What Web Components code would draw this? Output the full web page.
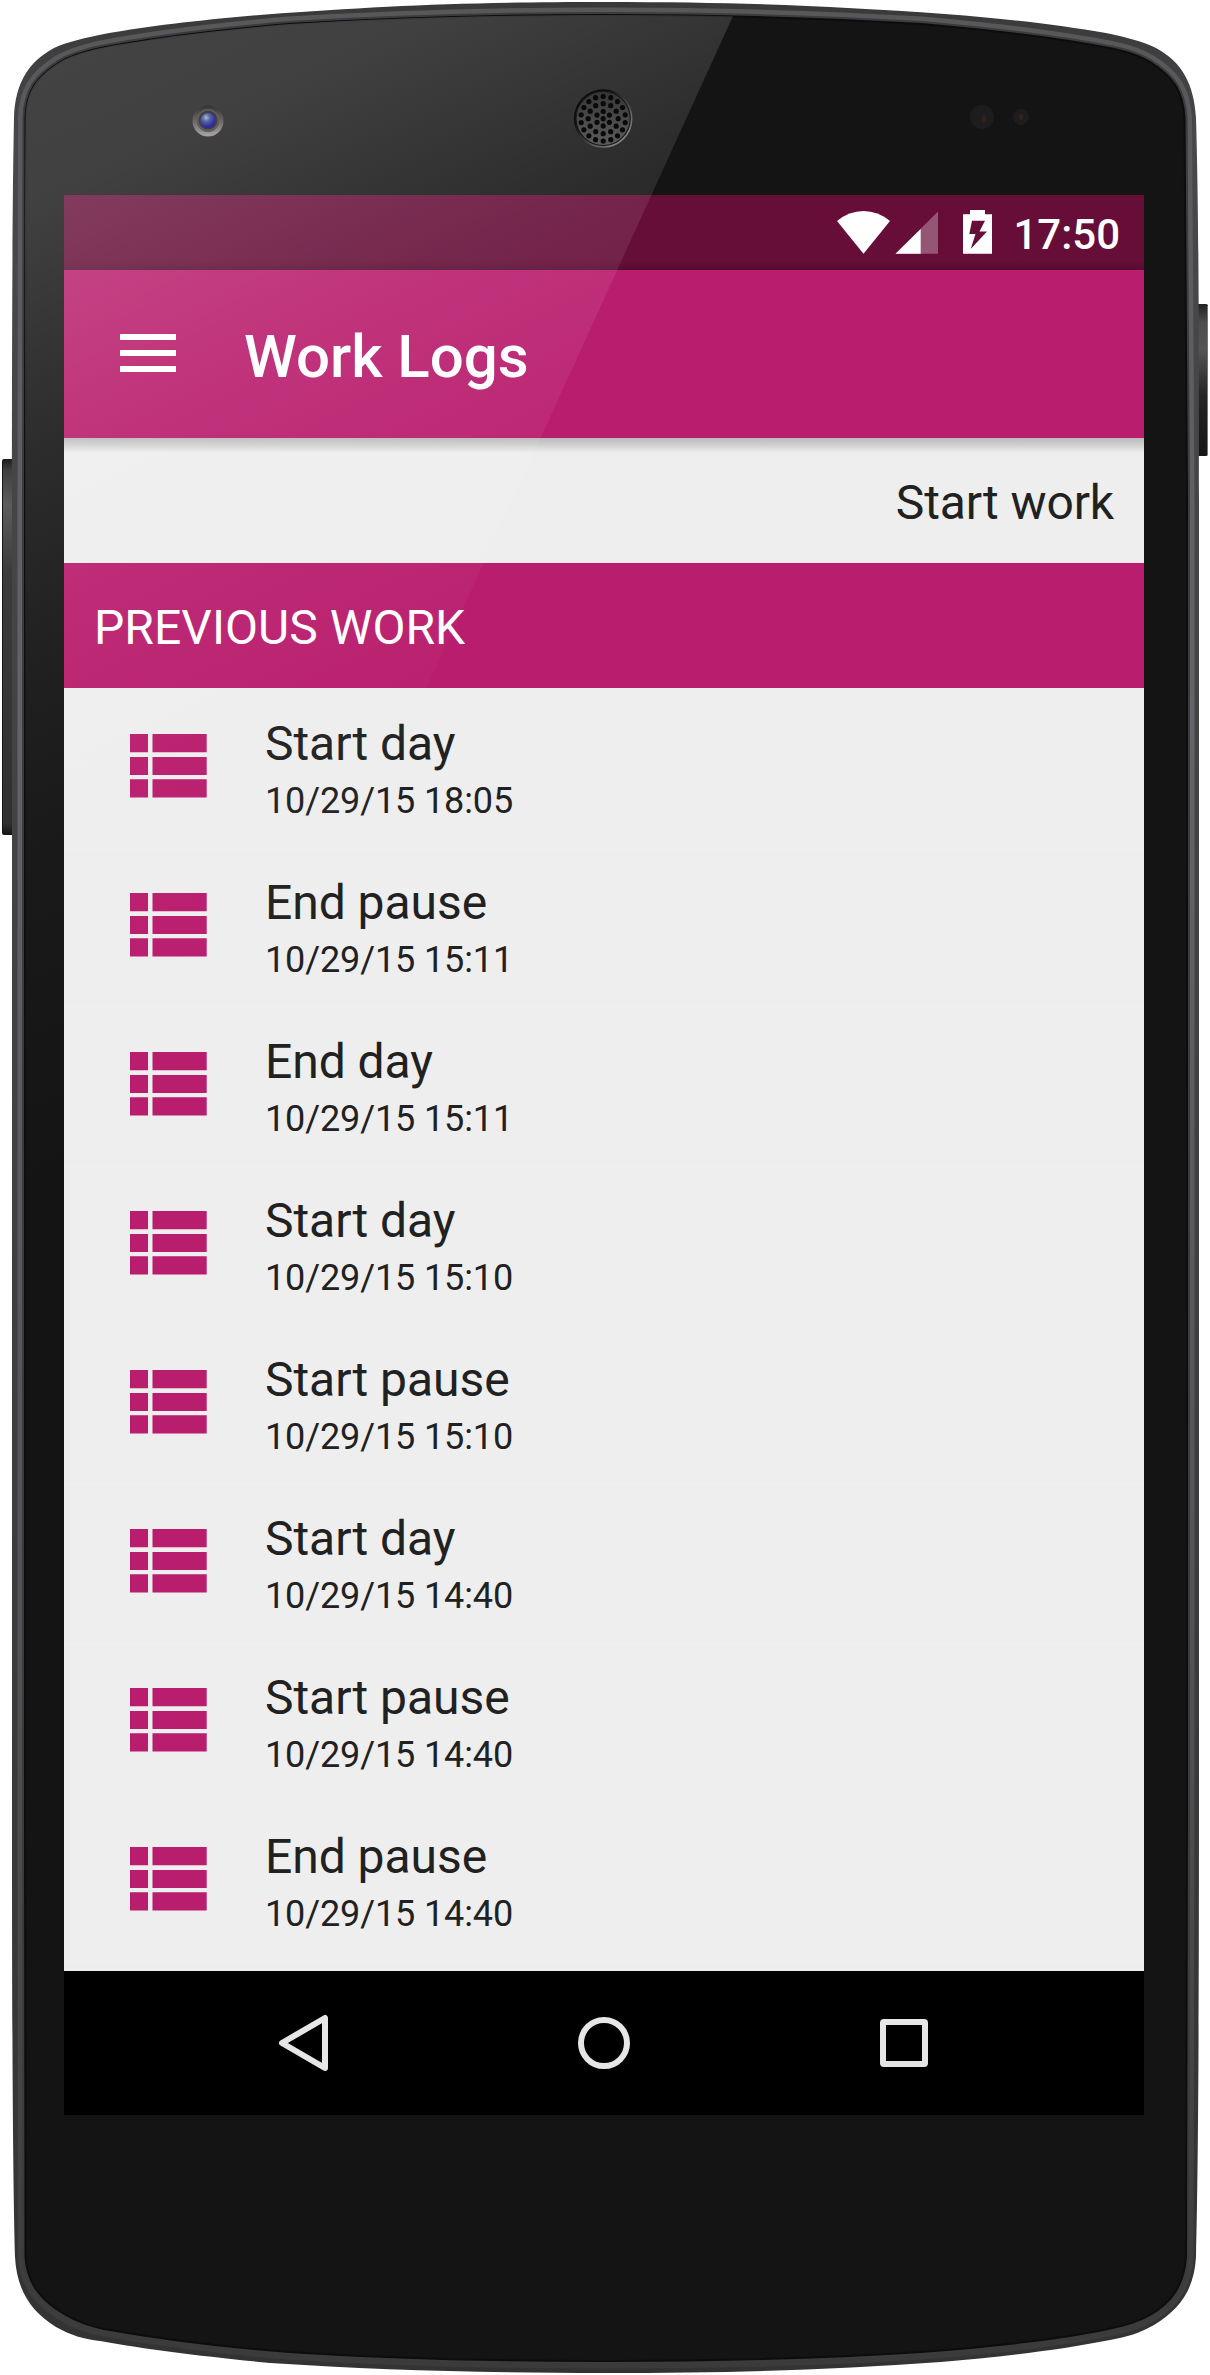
<!DOCTYPE html>
<html lang="en">
<head>
<meta charset="utf-8">
<title>Work Logs</title>
<style>
html,body{margin:0;padding:0;background:#fff}
body{width:1210px;height:2375px;overflow:hidden;font-family:Roboto,sans-serif;--pink:#b91d6d}
</style>
</head>
<body>
<phone-frame>
  <status-bar time="17:50"></status-bar>
  <app-bar>Work Logs</app-bar>
  <action-row>Start work</action-row>
  <section-header>PREVIOUS WORK</section-header>
  <log-list>
    <log-item when="10/29/15 18:05">Start day</log-item>
    <log-item when="10/29/15 15:11">End pause</log-item>
    <log-item when="10/29/15 15:11">End day</log-item>
    <log-item when="10/29/15 15:10">Start day</log-item>
    <log-item when="10/29/15 15:10">Start pause</log-item>
    <log-item when="10/29/15 14:40">Start day</log-item>
    <log-item when="10/29/15 14:40">Start pause</log-item>
    <log-item when="10/29/15 14:40">End pause</log-item>
  </log-list>
  <nav-bar></nav-bar>
</phone-frame>
<script>
const define = (name, render) => customElements.define(name, class extends HTMLElement {
  constructor() {
    super();
    this.attachShadow({ mode: 'open' }).innerHTML = render(this);
  }
});

// Outline of the casing and of the glass face
const OUTER = 'M605 2C470 2 380 6 266 14.500C200 20 150 26 104 34C85 38 67 42 54 48C28 62 15 84 14 118C12.500 200 12 300 12 500V1800C12 2050 13 2180 15 2257C17 2292 32 2312 56 2327C72 2336 84 2339 100 2341C150 2350 200 2356 270 2363C380 2370 480 2373 605 2373C730 2373 830 2370 941 2362C1000 2357 1060 2350 1110 2340C1127 2337 1140 2333 1154 2325C1180 2309 1194 2290 1196 2257C1198 2180 1199 2050 1199 1800V500C1199 300 1198.500 200 1196 118C1194 84 1182 62 1156 48C1142 41 1125 37 1106 33C1060 25 1010 19 945 14C830 6 740 2 605 2Z';
const INNER = 'M605 15C480 15 390 18 289 24C220 30 150 38 96 49C84 52 70 56 60 62C36 77 26 92 25.500 118C25 200 25 300 25 500V1800C25 2050 25 2180 25.500 2257C27 2284 42 2301 64 2314C76 2321 88 2326 104 2329C160 2339 210 2346 289 2352C380 2358 480 2361 605 2361C730 2361 830 2358 921 2352C1000 2346 1060 2339 1108 2329C1124 2326 1138 2322 1150 2315C1172 2302 1184 2285 1186 2257C1187 2180 1187 2050 1187 1800V500C1186 300 1186 200 1184.500 118C1183 92 1174 77 1150 62C1140 56 1128 52 1114 49C1060 38 990 30 921 24C820 18 730 15 605 15Z';

const holes = () => {
  let s = '';
  [[0, 1, 0], [7.2, 6, 0.5], [15, 12, 0], [22.3, 18, 0.5]].forEach(([r, n, o]) => {
    for (let i = 0; i < n; i++) {
      const a = (i + o) / n * Math.PI * 2;
      s += `<circle cx="${(603.2 + r * Math.cos(a)).toFixed(1)}" cy="${(118.7 + r * Math.sin(a)).toFixed(1)}" r="2.600"/>`;
    }
  });
  return s;
};

define('phone-frame', () => `
<style>
:host{display:block;position:relative;width:1210px;height:2375px}
svg{position:absolute;left:0;top:0;width:1210px;height:2375px;pointer-events:none}
.over{z-index:5}
.screen{position:relative;display:flex;flex-direction:column;width:1080px;height:1920px;margin:0 66px 0 64px;background:#eee}
.pad{height:195px}
</style>
<svg viewBox="0 0 1210 2375" aria-hidden="true">
  <defs>
    <linearGradient id="rim" x1="0" y1="0" x2="0" y2="1"><stop offset="0" stop-color="#39393a"/><stop offset=".06" stop-color="#48484b"/><stop offset=".5" stop-color="#404043"/><stop offset="1" stop-color="#333"/></linearGradient>
    <linearGradient id="lip" x1="0" y1="0" x2="0" y2="1"><stop offset="0" stop-color="#58585b"/><stop offset=".3" stop-color="#646468"/><stop offset=".7" stop-color="#525254"/><stop offset="1" stop-color="#3b3b3b"/></linearGradient>
    <linearGradient id="keyL" x1="0" y1="0" x2="0" y2="1"><stop offset="0" stop-color="#1c1c1c"/><stop offset=".03" stop-color="#404040"/><stop offset=".12" stop-color="#5c5c5c"/><stop offset=".3" stop-color="#3c3c3c"/><stop offset=".97" stop-color="#303030"/><stop offset="1" stop-color="#151515"/></linearGradient>
    <linearGradient id="keyR" x1="0" y1="0" x2="0" y2="1"><stop offset="0" stop-color="#222"/><stop offset=".12" stop-color="#4b4b4b"/><stop offset=".3" stop-color="#555"/><stop offset=".6" stop-color="#252525"/><stop offset="1" stop-color="#161616"/></linearGradient>
    <linearGradient id="spk" x1="0" y1="0" x2="1" y2="1"><stop offset=".3" stop-color="#0c0c0c"/><stop offset=".85" stop-color="#858585"/></linearGradient>
    <linearGradient id="mesh" x1="0" y1="0" x2="0" y2="1"><stop offset="0" stop-color="#363636"/><stop offset="1" stop-color="#5c5c5c"/></linearGradient>
    <linearGradient id="cam" x1="0" y1="0" x2="0" y2="1"><stop offset="0" stop-color="#333"/><stop offset=".5" stop-color="#6b6967"/><stop offset="1" stop-color="#aaa7a3"/></linearGradient>
    <radialGradient id="lens" cx=".38" cy=".3" r=".8"><stop offset="0" stop-color="#b5c0cc"/><stop offset=".3" stop-color="#5c6ba0"/><stop offset=".7" stop-color="#3230b0"/><stop offset="1" stop-color="#2b2768"/></radialGradient>
  </defs>
  <rect x="2" y="459" width="14" height="376" rx="2" fill="url(#keyL)"/>
  <path d="M2.500 461V833" stroke="#161616"/>
  <rect x="1194" y="304" width="14" height="152" rx="2" fill="url(#keyR)"/>
  <path d="M1207.500 306V455" stroke="#777"/>
  <path d="${OUTER}" fill="url(#rim)"/>
  <path d="${INNER}" fill="none" stroke="url(#lip)" stroke-width="15"/>
  <path d="${INNER}" fill="none" stroke="#3c3c3e" stroke-width="6"/>
  <path d="${INNER}" fill="#141414" stroke="#0d0d0d" stroke-width="2"/>
  <circle cx="982" cy="117" r="12" fill="#1e1d1d"/><ellipse cx="984" cy="119" rx="2" ry="3.500" fill="#36211a"/>
  <circle cx="1021" cy="117" r="8" fill="#1e1d1d"/><ellipse cx="1021" cy="117" rx="2" ry="3" fill="#36211a"/>
</svg>
<div class="pad"></div>
<div class="screen"><slot></slot></div>
<svg class="over" viewBox="0 0 1210 2375" aria-hidden="true">
  <defs>
    <linearGradient id="glare" gradientUnits="userSpaceOnUse" x1="0" y1="0" x2="473" y2="990"><stop offset="0" stop-color="#fff" stop-opacity=".205"/><stop offset=".18" stop-color="#fff" stop-opacity=".19"/><stop offset=".38" stop-color="#fff" stop-opacity=".105"/><stop offset=".55" stop-color="#fff" stop-opacity=".055"/><stop offset=".7" stop-color="#fff" stop-opacity=".025"/><stop offset="1" stop-color="#fff" stop-opacity="0"/></linearGradient>
    <clipPath id="face"><path d="${INNER}"/></clipPath>
  </defs>
  <path d="M0 0H740.300L23 1573H0Z" fill="url(#glare)" clip-path="url(#face)"/>
  <circle cx="208" cy="121" r="15.500" fill="url(#cam)"/>
  <circle cx="208" cy="120.500" r="11.500" fill="#625e5c"/>
  <circle cx="208" cy="120" r="9.500" fill="#423e46"/>
  <circle cx="208" cy="120.500" r="7.500" fill="url(#lens)"/>
  <circle cx="603.200" cy="118.500" r="28.500" fill="#1a1a1a" stroke="url(#spk)" stroke-width="1.500"/>
  <circle cx="603.200" cy="118.500" r="26.500" fill="url(#mesh)"/>
  <g fill="#090909">${holes()}</g>
</svg>`);

define('status-bar', el => `
<style>
:host{display:block;box-sizing:border-box;width:1080px;height:75px;flex:none;background:linear-gradient(#660e38 0 66px,#570c30 75px)}
.row{display:flex;align-items:flex-start;justify-content:flex-end;height:75px;padding-right:24px}
svg{display:block;width:160px;height:75px;margin-right:20px}
span{font-size:42px;line-height:48px;font-weight:500;color:#fff;padding-top:16px}
</style>
<div class="row">
<svg viewBox="833 195 160 75"><path d="M837 221Q849 211 863.500 211T890 221L863.500 253.700Z" fill="#fff"/><path d="M938 211.500V253.700H895.500Z" fill="#fff" opacity=".3"/><path d="M920.700 229V253.700H895.500Z" fill="#fff"/><path fill="#fff" fill-rule="evenodd" d="M970 210H985V214.300H992V253.700H963V214.300H970ZM972 220.700L969.300 234H975.500L970.700 249L987 231.500H979.500L985 220.700Z"/></svg>
<span>${el.getAttribute('time')}</span></div>`);

define('app-bar', () => `
<style>
:host{display:flex;position:relative;z-index:1;box-sizing:border-box;height:168px;flex:none;padding-left:56px;align-items:flex-start;background:var(--pink);color:#fff}
svg{width:56px;height:38px;margin-top:64px}
h1{margin:0 0 0 68px;padding-top:51px;font-size:60px;line-height:72px;font-weight:500;white-space:nowrap}
.shade{position:absolute;left:0;right:0;top:168px;height:15px;background:linear-gradient(rgba(0,0,0,.22),rgba(0,0,0,.13) 45%,transparent)}
</style>
<svg viewBox="0 0 56 38" fill="#fff"><path d="M0 0H56V6H0ZM0 16H56V22H0ZM0 32H56V38H0Z"/></svg>
<h1><slot></slot></h1><div class="shade"></div>`);

define('action-row', () => `
<style>:host{display:flex;box-sizing:border-box;height:125px;flex:none;align-items:flex-start;justify-content:flex-end;padding:37px 30px 0 0;font-size:48px;line-height:56px;letter-spacing:-.12px;color:#212121;background:#eee}</style>
<slot></slot>`);

define('section-header', () => `
<style>:host{display:block;box-sizing:border-box;height:125px;flex:none;padding:37px 0 0 30px;font-size:48px;line-height:56px;letter-spacing:.05px;color:#fff;background:var(--pink)}</style>
<slot></slot>`);

define('log-list', () => `<style>:host{display:flex;flex-direction:column;height:1283px;flex:none;background:#eee}</style><slot></slot>`);

define('log-item', el => `
<style>
:host{display:flex;box-sizing:border-box;height:159px;flex:none;align-items:flex-start;padding-left:66px;color:#212121;box-shadow:0 3px 0 #efeff2}
svg{width:77px;height:64px;margin-top:46px;fill:var(--pink)}
.t{margin-left:58px;display:flex;flex-direction:column;padding-top:28px}
.a{font-size:48px;line-height:56px;letter-spacing:-.05px}
.b{font-size:36px;line-height:42px;margin-top:8px;letter-spacing:-.12px}
</style>
<svg viewBox="0 0 77 64"><path d="M0 0H18V18.300H0ZM22.500 0H76.700V18.300H22.500ZM0 23H18V41H0ZM22.500 23H76.700V41H22.500ZM0 45.300H18V63.500H0ZM22.500 45.300H76.700V63.500H22.500Z"/></svg>
<div class="t"><div class="a"><slot></slot></div><div class="b">${el.getAttribute('when')}</div></div>`);

define('nav-bar', () => `
<style>
:host{display:flex;height:144px;flex:none;align-items:center;justify-content:center;gap:240px;background:#000}
svg{width:60px;height:60px;fill:none;stroke:#e6e6e6;stroke-width:6}
</style>
<svg viewBox="0 0 60 60"><path d="M51 5V55L8 30Z" stroke-linejoin="round"/></svg>
<svg viewBox="0 0 60 60"><circle cx="30" cy="30" r="23"/></svg>
<svg viewBox="0 0 60 60"><rect x="9" y="9" width="42" height="42" rx="1" stroke-linejoin="round"/></svg>`);
</script>
</body>
</html>
